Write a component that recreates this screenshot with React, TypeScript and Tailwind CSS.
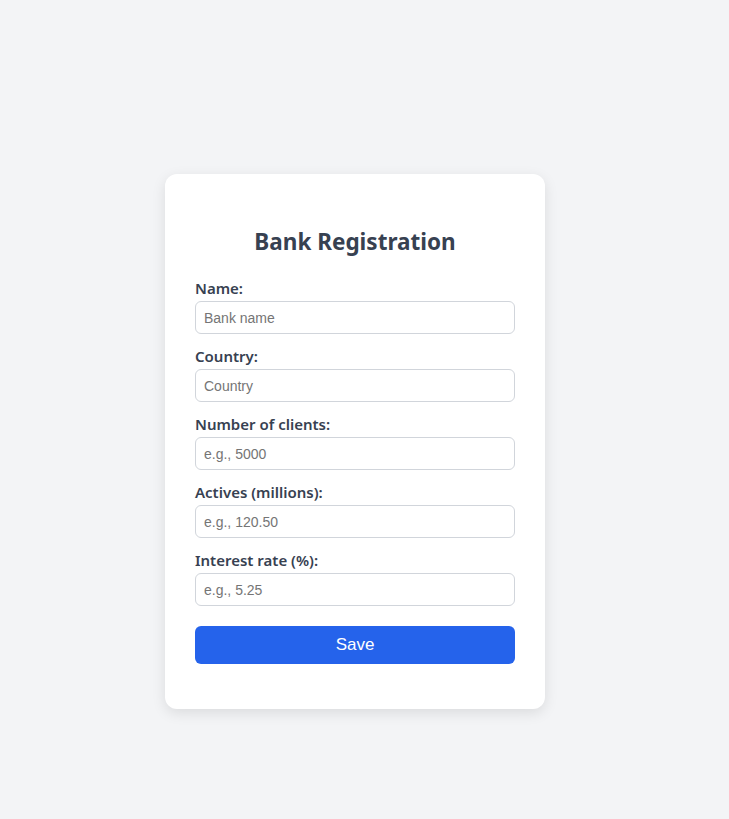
import { useState } from 'react';

const FIELDS = [
  { key: 'name', label: 'Name:', placeholder: 'Bank name', type: 'text' },
  { key: 'country', label: 'Country:', placeholder: 'Country', type: 'text' },
  { key: 'clients', label: 'Number of clients:', placeholder: 'e.g., 5000', type: 'number' },
  { key: 'actives', label: 'Actives (millions):', placeholder: 'e.g., 120.50', type: 'number' },
  { key: 'rate', label: 'Interest rate (%):', placeholder: 'e.g., 5.25', type: 'number' },
];

export default function App() {
  const [values, setValues] = useState<Record<string, string>>({});

  const handleChange = (key: string, value: string) => {
    setValues((prev) => ({ ...prev, [key]: value }));
  };

  return (
    <div className="min-h-screen bg-[#f3f4f6] flex justify-center pt-[174px] pr-[19px] font-['Noto_Sans',sans-serif]">
      <div className="w-[380px] h-[535px] bg-white rounded-xl shadow-[0_4px_14px_rgba(0,0,0,0.1)] px-[30px] pt-[30px]">
        <h2 className="mt-[22px] mb-[20px] text-center text-[22.5px] leading-8 font-bold text-[#374151]">
          Bank Registration
        </h2>
        <form
          onSubmit={(event) => event.preventDefault()}
          className="flex flex-col gap-3"
        >
          {FIELDS.map((f) => (
            <div key={f.key} className="flex flex-col gap-[3px]">
              <label className="text-[15px] leading-5 font-semibold text-[#374151]">{f.label}</label>
              <input
                type="text"
                placeholder={f.placeholder}
                value={values[f.key] ?? ''}
                onChange={(event) => handleChange(f.key, event.target.value)}
                className="h-[33px] px-2 border border-[#d1d5db] rounded-md text-[14px] font-['Liberation_Sans',sans-serif] text-[#111827] placeholder:text-[#757575] outline-none"
              />
            </div>
          ))}
          <button
            type="submit"
            className="mt-2 h-[38px] rounded-md bg-[#2563eb] text-white text-[17px] font-['Liberation_Sans',sans-serif]"
          >
            Save
          </button>
        </form>
      </div>
    </div>
  );
}
